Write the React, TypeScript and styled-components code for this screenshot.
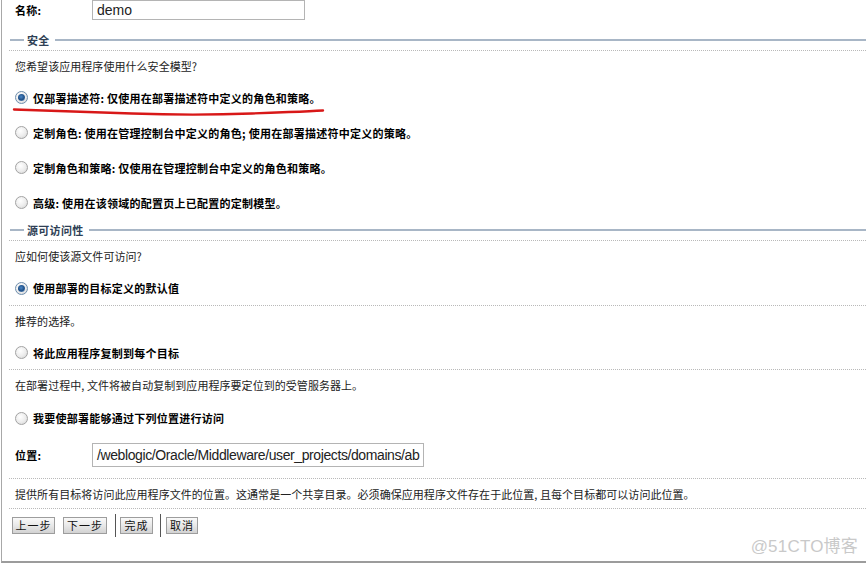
import React from "react";
import styled, { createGlobalStyle, css } from "styled-components";

const GlobalStyle = createGlobalStyle`
  html, body {
    margin: 0;
    padding: 0;
    background: #ffffff;
  }
  body {
    font-family: "Noto Sans CJK SC", "Liberation Sans", sans-serif;
    font-size: 11px;
    color: #111;
  }
`;

const Panel = styled.div`
  position: relative;
  width: 865px;
  height: 563px;
  margin-left: 1px;
  padding-left: 7px;
  box-sizing: border-box;
  border-left: 1px solid #a8a8a8;
  border-bottom: 2px solid #9c9c9c;
  overflow: hidden;
`;

const FieldRow = styled.div<{ $h: number; $top?: number; $dotted?: boolean }>`
  display: flex;
  align-items: ${(p) => (p.$top ? "flex-start" : "center")};
  height: ${(p) => p.$h}px;
  padding-left: 6px;
  padding-top: ${(p) => p.$top || 0}px;
  box-sizing: border-box;
  border-bottom: ${(p) => (p.$dotted ? "1px dotted #b9b9b9" : "none")};
`;

const FieldLabel = styled.span<{ $mt?: number }>`
  width: 77px;
  font-weight: bold;
  font-size: 11px;
  letter-spacing: 0.3px;
  color: #000;
  margin-top: ${(p) => p.$mt || 0}px;
`;

const TextBox = styled.div<{ $w: number; $h: number; $size: number; $ls?: number }>`
  width: ${(p) => p.$w}px;
  height: ${(p) => p.$h}px;
  box-sizing: border-box;
  border: 1px solid #b4b4b4;
  padding-left: 4px;
  display: flex;
  align-items: center;
  font-family: "Liberation Sans", Arial, sans-serif;
  font-size: ${(p) => p.$size}px;
  letter-spacing: ${(p) => p.$ls || 0}px;
  color: #222;
  white-space: nowrap;
  overflow: hidden;
`;

const SectionHeader = styled.div<{ $mt?: number }>`
  display: flex;
  align-items: center;
  height: 21px;
  margin-top: ${(p) => p.$mt || 0}px;
  padding-left: 1px;
  box-sizing: border-box;
  border-bottom: 1px dotted #b9b9b9;
  font-weight: bold;
  font-size: 11px;
  letter-spacing: 0.3px;
  color: #2f3f55;

  &::before {
    content: "";
    width: 14px;
    height: 2px;
    background: #a8b6c6;
    margin-right: 3px;
  }
  &::after {
    content: "";
    flex: 1;
    height: 2px;
    background: #a8b6c6;
    margin-left: 5px;
  }
`;

const Hint = styled.div<{ $h: number; $dotted?: boolean }>`
  display: flex;
  align-items: center;
  height: ${(p) => p.$h}px;
  padding-left: 6px;
  box-sizing: border-box;
  border-bottom: ${(p) => (p.$dotted ? "1px dotted #b9b9b9" : "none")};
  font-size: 11px;
  letter-spacing: 0.05px;
  color: #222;
  white-space: nowrap;
`;

const Choice = styled.label<{ $h: number; $dotted?: boolean }>`
  display: flex;
  align-items: center;
  gap: 5px;
  height: ${(p) => p.$h}px;
  padding-left: 6px;
  box-sizing: border-box;
  border-bottom: ${(p) => (p.$dotted ? "1px dotted #b9b9b9" : "none")};
  font-weight: bold;
  font-size: 11px;
  letter-spacing: 0.25px;
  color: #000;
  white-space: nowrap;
`;

const Radio = styled.span<{ $on?: boolean }>`
  position: relative;
  flex: none;
  width: 13px;
  height: 13px;
  border-radius: 50%;
  box-sizing: border-box;
  border: 1px solid #a3a3a3;
  background: radial-gradient(circle at 40% 35%, #ffffff 0%, #ececec 55%, #cfcfcf 100%);

  ${(p) =>
    p.$on &&
    css`
      border-color: #6f8fae;
      &::after {
        content: "";
        position: absolute;
        left: 2px;
        top: 2px;
        width: 7px;
        height: 7px;
        border-radius: 50%;
        background: radial-gradient(circle at 45% 40%, #4a86c5 0%, #1f4f86 55%, #9fc3e6 100%);
      }
    `}
`;

const ButtonBar = styled.div`
  display: flex;
  align-items: center;
  height: 30px;
  padding-left: 3px;
  padding-top: 2px;
  box-sizing: border-box;
`;

const Button = styled.button<{ $w: number; $ml?: number }>`
  width: ${(p) => p.$w}px;
  height: 17px;
  margin-left: ${(p) => p.$ml || 0}px;
  padding: 0;
  box-sizing: border-box;
  border: 1px solid #9d9d9d;
  border-radius: 0;
  background: linear-gradient(#fafafa, #e6e6e6 55%, #d2d2d2);
  font-family: "Noto Sans CJK SC", sans-serif;
  font-size: 11px;
  letter-spacing: 1px;
  color: #111;
  line-height: 15px;
`;

const Divider = styled.span<{ $ml: number }>`
  width: 1px;
  height: 23px;
  margin-left: ${(p) => p.$ml}px;
  background: #555;
`;

const Scribble = styled.svg`
  position: absolute;
  left: 10px;
  top: 104px;
  width: 320px;
  height: 16px;
  overflow: visible;
`;

const Watermark = styled.div`
  position: absolute;
  right: 8px;
  bottom: 4px;
  font-family: "Liberation Sans", "Noto Sans CJK SC", sans-serif;
  font-size: 17px;
  color: #c9c9c9;
  letter-spacing: 0.2px;
`;

export default function App() {
  return (
    <>
      <GlobalStyle />
      <Panel>
        <FieldRow $h={20}>
          <FieldLabel>名称:</FieldLabel>
          <TextBox $w={213} $h={20} $size={14}>
            demo
          </TextBox>
        </FieldRow>

        <SectionHeader $mt={10}>安全</SectionHeader>
        <Hint $h={29}>您希望该应用程序使用什么安全模型?</Hint>
        <Choice $h={35}>
          <Radio $on />
          仅部署描述符: 仅使用在部署描述符中定义的角色和策略。
        </Choice>
        <Choice $h={35}>
          <Radio />
          定制角色: 使用在管理控制台中定义的角色; 使用在部署描述符中定义的策略。
        </Choice>
        <Choice $h={35}>
          <Radio />
          定制角色和策略: 仅使用在管理控制台中定义的角色和策略。
        </Choice>
        <Choice $h={35}>
          <Radio />
          高级: 使用在该领域的配置页上已配置的定制模型。
        </Choice>

        <SectionHeader>源可访问性</SectionHeader>
        <Hint $h={30}>应如何使该源文件可访问?</Hint>
        <Choice $h={35} $dotted>
          <Radio $on />
          使用部署的目标定义的默认值
        </Choice>
        <Hint $h={30}>推荐的选择。</Hint>
        <Choice $h={34} $dotted>
          <Radio />
          将此应用程序复制到每个目标
        </Choice>
        <Hint $h={30}>在部署过程中, 文件将被自动复制到应用程序要定位到的受管服务器上。</Hint>
        <Choice $h={36}>
          <Radio />
          我要使部署能够通过下列位置进行访问
        </Choice>

        <FieldRow $h={43} $top={7} $dotted>
          <FieldLabel $mt={4}>位置:</FieldLabel>
          <TextBox $w={332} $h={24} $size={14} $ls={-0.4}>
            /weblogic/Oracle/Middleware/user_projects/domains/ab
          </TextBox>
        </FieldRow>
        <Hint $h={30} $dotted>
          提供所有目标将访问此应用程序文件的位置。这通常是一个共享目录。必须确保应用程序文件存在于此位置, 且每个目标都可以访问此位置。
        </Hint>

        <ButtonBar>
          <Button $w={43}>上一步</Button>
          <Button $w={44} $ml={8}>
            下一步
          </Button>
          <Divider $ml={8} />
          <Button $w={33} $ml={4}>
            完成
          </Button>
          <Divider $ml={7} />
          <Button $w={32} $ml={5}>
            取消
          </Button>
        </ButtonBar>

        <Scribble viewBox="0 0 320 16">
          <path
            d="M2 5.5 C 40 6.5, 80 8, 120 9.5 S 190 11.5, 240 9.5 S 295 7.5, 311 6.5"
            fill="none"
            stroke="#d81818"
            strokeWidth="2.4"
            strokeLinecap="round"
          />
        </Scribble>

        <Watermark>@51CTO博客</Watermark>
      </Panel>
    </>
  );
}
